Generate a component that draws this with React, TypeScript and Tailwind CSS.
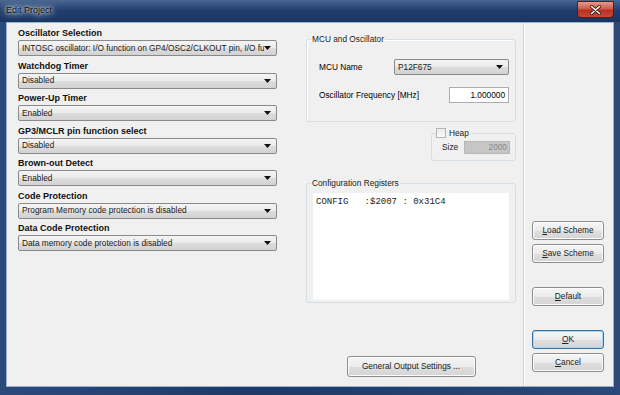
import React from 'react';

const settings = [
  { label: 'Oscillator Selection', value: 'INTOSC oscillator: I/O function on GP4/OSC2/CLKOUT pin, I/O function on GP5/CLKIN' },
  { label: 'Watchdog Timer', value: 'Disabled' },
  { label: 'Power-Up Timer', value: 'Enabled' },
  { label: 'GP3/MCLR pin function select', value: 'Disabled' },
  { label: 'Brown-out Detect', value: 'Enabled' },
  { label: 'Code Protection', value: 'Program Memory code protection is disabled' },
  { label: 'Data Code Protection', value: 'Data memory code protection is disabled' },
];

function Arrow() {
  return (
    <svg width="7" height="4" viewBox="0 0 7 4" className="shrink-0">
      <path d="M0 0h7L3.5 4z" fill="#111" />
    </svg>
  );
}

function Combo({ value, className = '' }: { value: string; className?: string }) {
  return (
    <div
      className={`flex items-center rounded-[2px] border border-[#8a8a8a] bg-[linear-gradient(to_bottom,#f4f4f4_0%,#ebebeb_50%,#dddddd_51%,#d2d2d2_100%)] pl-[3px] pr-[5px] ${className}`}
    >
      <span className="flex-1 overflow-hidden whitespace-nowrap text-[#1a1a1a]">{value}</span>
      <Arrow />
    </div>
  );
}

function WinButton({ children, focused = false, className = '' }: { children: React.ReactNode; focused?: boolean; className?: string }) {
  return (
    <button
      className={`flex items-center justify-center rounded-[3px] border bg-[linear-gradient(to_bottom,#f6f6f6_0%,#ebebeb_50%,#dfdfdf_51%,#d4d4d4_100%)] text-[#222] ${
        focused ? 'border-[#3c6fa0] shadow-[inset_0_0_0_1px_#a9d6f5]' : 'border-[#8e8e8e] shadow-[inset_0_0_0_1px_#fcfcfc]'
      } ${className}`}
    >
      {children}
    </button>
  );
}

export default function App() {
  return (
    <div className="flex h-[395px] w-[620px] flex-col bg-[linear-gradient(to_right,#2b4a7c,#1e3968_40%,#2a4878)] font-['Liberation_Sans',Arial,sans-serif] text-[8.3px] text-black">
      {/* title bar */}
      <div className="relative flex h-[22px] shrink-0 items-center bg-[linear-gradient(to_bottom,#4b6791,#223f6e_45%,#1b3562)] pl-[6px]">
        <span className="text-[9px] text-[#0d0d0d] [text-shadow:0_0_3px_#e8eef6,0_0_6px_#d5dfec,0_0_9px_#c3d0e2]">
          Edit Project
        </span>
        <div className="absolute right-[6px] top-[1px] flex h-[17px] w-[37px] items-center justify-center rounded-b-[4px] border border-[#5a1a14] bg-[linear-gradient(to_bottom,#e39a8f,#d0594a_45%,#b8301f_55%,#c84a33)]">
          <svg width="11" height="10" viewBox="0 0 11 10">
            <path d="M1.5 1.5l8 7M9.5 1.5l-8 7" stroke="#3a1510" strokeWidth="3" strokeLinecap="round" />
            <path d="M1.5 1.5l8 7M9.5 1.5l-8 7" stroke="#fff" strokeWidth="1.6" strokeLinecap="round" />
          </svg>
        </div>
      </div>

      {/* client */}
      <div className="flex flex-1 px-[6px] pb-[8px]">
        <div className="flex flex-1 border border-[#9fb2cc] bg-[#f0f0f0]">
          <div className="flex w-[516px] gap-[29px] pl-[11px] pt-[4px]">
            {/* left column */}
            <div className="flex w-[259px] flex-col">
              {settings.map((s) => (
                <div key={s.label} className="h-[32.5px]">
                  <div className="h-[13px] text-[9px] font-bold leading-[13px] text-[#111]">{s.label}</div>
                  <Combo value={s.value} className="h-[16px]" />
                </div>
              ))}
            </div>

            {/* middle column */}
            <div className="flex w-[210px] flex-col pt-[6px] pb-[9px]">
              <fieldset className="rounded-[3px] border border-[#d5dfe5] shadow-[inset_1px_1px_0_#fff]">
                <legend className="ml-[4px] px-[1px] leading-[12px] text-[#222]">MCU and Oscillator</legend>
                <div className="flex flex-col gap-[12px] pb-[18px] pl-[12px] pr-[6px] pt-[14px]">
                  <div className="flex h-[16px] items-center">
                    <span className="w-[75px]">MCU Name</span>
                    <Combo value="P12F675" className="h-[16px] flex-1" />
                  </div>
                  <div className="flex h-[16px] items-center justify-between">
                    <span>Oscillator Frequency [MHz]</span>
                    <div className="flex h-[16px] w-[60px] items-center justify-end border border-[#abadb3] bg-white pr-[3px]">
                      1.000000
                    </div>
                  </div>
                </div>
              </fieldset>

              <fieldset className="ml-auto mt-[5px] w-[85px] rounded-[3px] border border-[#d5dfe5]">
                <legend className="ml-[4px] flex items-center gap-[3px] pr-[2px] leading-[12px]">
                  <span className="h-[10px] w-[10px] border border-[#b4b4b4] bg-[linear-gradient(to_bottom,#ececec,#f9f9f9)]" />
                  <span className="text-[#222]">Heap</span>
                </legend>
                <div className="flex items-center gap-[6px] pb-[6px] pl-[10px] pr-[5px] pt-[2px]">
                  <span className="text-[#222]">Size</span>
                  <div className="flex h-[13px] flex-1 items-center justify-end border border-[#b8b8b8] bg-[#c6c6c6] pr-[2px] text-[#8a8a8a]">
                    2000
                  </div>
                </div>
              </fieldset>

              <fieldset className="mt-[16px] rounded-[3px] border border-[#d5dfe5]">
                <legend className="ml-[4px] px-[1px] leading-[12px] text-[#222]">Configuration Registers</legend>
                <div className="px-[6px] pb-[2px] pt-[4px]">
                  <div className="h-[107px] whitespace-pre bg-white pl-[3px] pt-[4px] font-['Liberation_Mono','Courier_New',monospace] text-[9px] leading-[11px] text-[#222]">
                    {'CONFIG   :$2007 : 0x31C4'}
                  </div>
                </div>
              </fieldset>

              <WinButton className="mx-auto mt-auto h-[21px] w-[129px]">General Output Settings ...</WinButton>
            </div>
          </div>

          {/* right pane */}
          <div className="flex flex-1 flex-col border-l border-[#cfcfcf] pb-[14px] pl-[8px] shadow-[inset_1px_0_0_#fff]">
            <div className="flex-1" />
            <WinButton className="h-[19px] w-[72px]">
              <u>L</u>oad Scheme
            </WinButton>
            <WinButton className="mt-[4px] h-[19px] w-[72px]">
              <u>S</u>ave Scheme
            </WinButton>
            <WinButton className="mt-[24px] h-[19px] w-[72px]">
              <u>D</u>efault
            </WinButton>
            <WinButton focused className="mt-[24px] h-[19px] w-[72px]">
              <u>O</u>K
            </WinButton>
            <WinButton className="mt-[4px] h-[19px] w-[72px]">
              <u>C</u>ancel
            </WinButton>
          </div>
        </div>
      </div>
    </div>
  );
}
